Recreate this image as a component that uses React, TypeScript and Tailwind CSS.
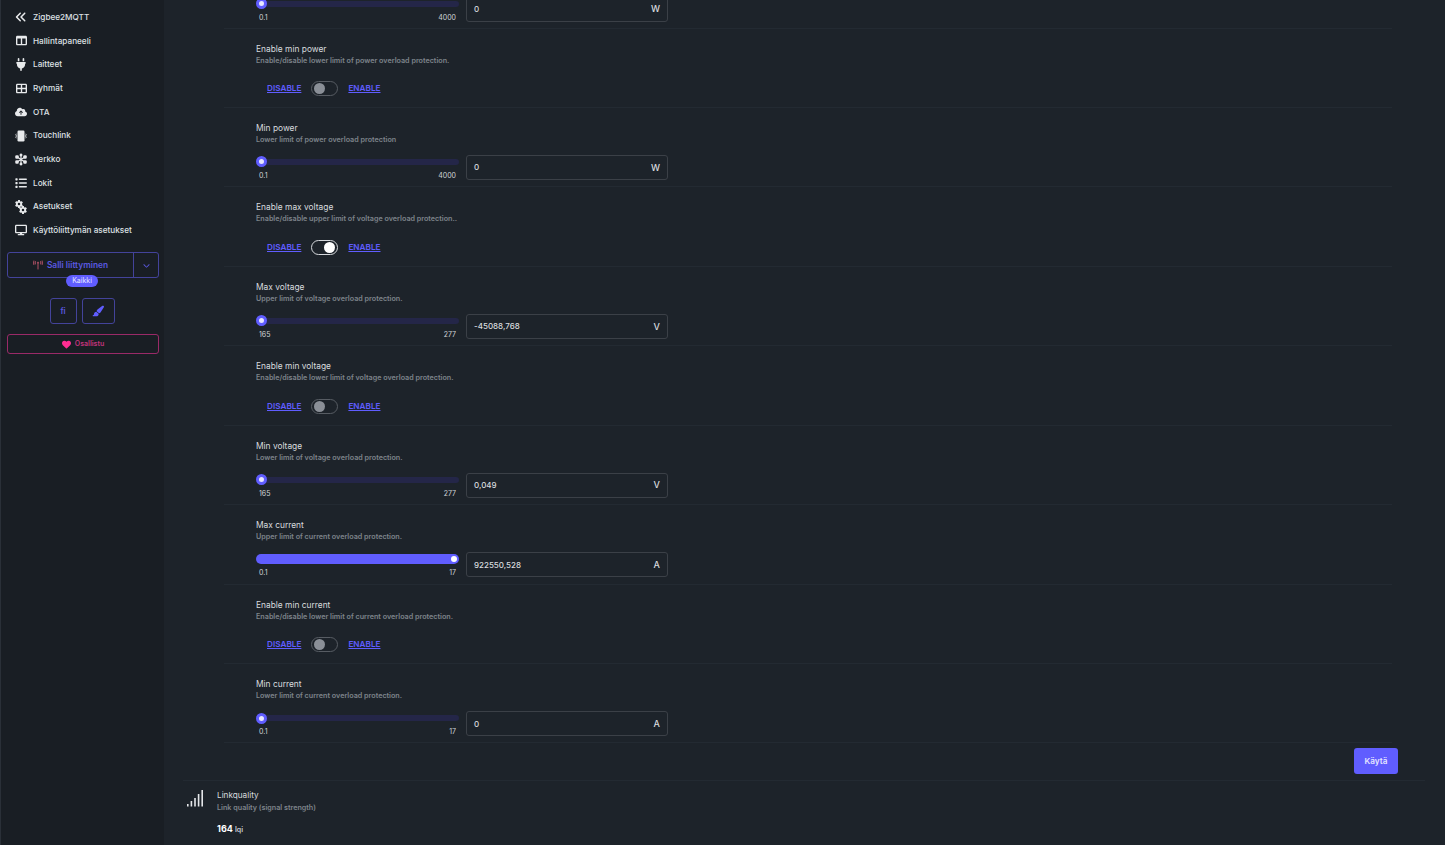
import React from "react";
import {
  FaAnglesLeft,
  FaTableColumns,
  FaPlug,
  FaTableCellsLarge,
  FaCloudArrowUp,
  FaList,
  FaGear,
  FaDisplay,
  FaTowerBroadcast,
  FaPaintbrush,
  FaHeart,
  FaChevronDown,
} from "react-icons/fa6";

function TouchlinkIcon() {
  return (
    <svg viewBox="0 0 24 24" className="h-[14px] w-[14px]" fill="currentColor">
      <rect x="5" y="1" width="14" height="22" rx="2.5" />
      <path d="M2.4 7 .6 9.5l1.6 2.5-1.6 2.5L2.4 17l.9-.8-1.1-1.7 1.6-2.5-1.6-2.5 1.1-1.7zM21.6 7l1.8 2.5-1.6 2.5 1.6 2.5-1.8 2.5-.9-.8 1.1-1.7-1.6-2.5 1.6-2.5-1.1-1.7z" />
    </svg>
  );
}

function NetworkIcon() {
  return (
    <svg viewBox="0 0 24 24" className="h-[13px] w-[13px]" fill="currentColor" stroke="currentColor">
      <path d="M12 2v20M4 7l16 10M20 7 4 17" strokeWidth="2.4" fill="none" />
      <circle cx="12" cy="3" r="2.4" />
      <circle cx="12" cy="21" r="2.4" />
      <rect x="1" y="4" width="6" height="6" rx="1.5" />
      <rect x="17" y="4" width="6" height="6" rx="1.5" />
      <rect x="1" y="14" width="6" height="6" rx="1.5" />
      <rect x="17" y="14" width="6" height="6" rx="1.5" />
    </svg>
  );
}

function GearsIcon() {
  return (
    <span className="flex h-[14px] w-[14px] flex-col">
      <FaGear className="h-[8px] w-[8px] self-start" />
      <FaGear className="-mt-[2px] h-[8px] w-[8px] self-end" />
    </span>
  );
}

const nav = [
  { label: "Zigbee2MQTT", icon: <FaAnglesLeft className="h-[12px] w-[12px]" /> },
  { label: "Hallintapaneeli", icon: <FaTableColumns className="h-[11px] w-[11px]" /> },
  { label: "Laitteet", icon: <FaPlug className="h-[13px] w-[13px]" /> },
  { label: "Ryhmät", icon: <FaTableCellsLarge className="h-[11px] w-[11px]" /> },
  { label: "OTA", icon: <FaCloudArrowUp className="h-[14px] w-[14px]" /> },
  { label: "Touchlink", icon: <TouchlinkIcon /> },
  { label: "Verkko", icon: <NetworkIcon /> },
  { label: "Lokit", icon: <FaList className="h-[12px] w-[12px]" /> },
  { label: "Asetukset", icon: <GearsIcon /> },
  { label: "Käyttöliittymän asetukset", icon: <FaDisplay className="h-[12px] w-[12px]" /> },
];

type Row =
  | { kind: "toggle"; title: string; desc: string; on?: boolean }
  | { kind: "range"; title: string; desc: string; min: string; max: string; value: string; unit: string; full?: boolean };

const rows: Row[] = [
  { kind: "toggle", title: "Enable min power", desc: "Enable/disable lower limit of power overload protection." },
  { kind: "range", title: "Min power", desc: "Lower limit of power overload protection", min: "0.1", max: "4000", value: "0", unit: "W" },
  { kind: "toggle", title: "Enable max voltage", desc: "Enable/disable upper limit of voltage overload protection..", on: true },
  { kind: "range", title: "Max voltage", desc: "Upper limit of voltage overload protection.", min: "165", max: "277", value: "-45088,768", unit: "V" },
  { kind: "toggle", title: "Enable min voltage", desc: "Enable/disable lower limit of voltage overload protection." },
  { kind: "range", title: "Min voltage", desc: "Lower limit of voltage overload protection.", min: "165", max: "277", value: "0,049", unit: "V" },
  { kind: "range", title: "Max current", desc: "Upper limit of current overload protection.", min: "0.1", max: "17", value: "922550,528", unit: "A", full: true },
  { kind: "toggle", title: "Enable min current", desc: "Enable/disable lower limit of current overload protection." },
  { kind: "range", title: "Min current", desc: "Lower limit of current overload protection.", min: "0.1", max: "17", value: "0", unit: "A" },
];

function Slider({ full }: { full?: boolean }) {
  if (full) {
    return (
      <div className="relative h-[10px] w-[203px] rounded-full bg-[#605dff]">
        <span className="absolute right-[2px] top-[2px] h-[6px] w-[6px] rounded-full bg-white" />
      </div>
    );
  }
  return (
    <div className="relative h-[6px] w-[203px] rounded-full bg-[#242648]">
      <span className="absolute -top-[2.5px] left-0 h-[11px] w-[11px] rounded-full border-[3px] border-[#605dff] bg-[#e8e8ff]" />
    </div>
  );
}

function RangeControl({ min, max, value, unit, full }: { min: string; max: string; value: string; unit: string; full?: boolean }) {
  return (
    <div className="flex items-start">
      <div className="w-[203px]">
        <div className="flex h-[14px] items-center">
          <Slider full={full} />
        </div>
        <div className="mt-[1px] flex justify-between px-[3px] text-[7px] leading-[11px] text-[#d0d3d7]">
          <span>{min}</span>
          <span>{max}</span>
        </div>
      </div>
      <div className="ml-[7px] flex h-[25px] w-[202px] items-center justify-between rounded-[3px] border border-[#3b4047] px-[7px] text-[8px] font-medium text-[#d8dbdf]">
        <span>{value}</span>
        <span className="text-[9px]">{unit}</span>
      </div>
    </div>
  );
}

function SettingRow({ row }: { row: Row }) {
  return (
    <div className="box-border h-[79.44px] border-b border-[#232a32] pl-8 pt-[14px]">
      <div className="text-[8.4px] leading-[13px] text-[#d8dbdf]">{row.title}</div>
      <div className="text-[7.2px] font-semibold leading-[10.5px] text-[#7d838b]">{row.desc}</div>
      {row.kind === "toggle" ? (
        <div className="mt-[14.5px] flex h-[16px] items-center pl-[11px] text-[8.2px] font-semibold text-[#605dff]">
          <span className="underline">DISABLE</span>
          <span
            className={`mx-[10px] flex h-[15px] w-[27px] items-center rounded-full border px-[2px] ${
              row.on ? "justify-end border-[#d5d8dc]" : "border-[#575c63]"
            }`}
          >
            <span className={`h-[11px] w-[11px] rounded-full ${row.on ? "bg-white" : "bg-[#8a8f97]"}`} />
          </span>
          <span className="underline">ENABLE</span>
        </div>
      ) : (
        <div className="mt-[9.5px]">
          <RangeControl min={row.min} max={row.max} value={row.value} unit={row.unit} full={row.full} />
        </div>
      )}
    </div>
  );
}

export default function App() {
  return (
    <div
      className="flex h-[845px] w-[1445px] overflow-hidden bg-[#1d232a] text-[#d8dbdf]"
      style={{ fontFamily: "Inter, sans-serif" }}
    >
      <aside className="flex w-[164px] shrink-0 flex-col border-l border-[#2a3038] bg-[#191e24] px-[6px] pt-[5.5px]">
        <nav className="flex flex-col">
          {nav.map((item) => (
            <div key={item.label} className="flex h-[23.67px] items-center gap-[6px] pl-[8px] text-[8.2px] font-medium text-[#dfe1e4]">
              <span className="flex w-[12px] justify-center text-[#e8eaec]">{item.icon}</span>
              {item.label}
            </div>
          ))}
        </nav>
        <div className="mt-[10px] flex h-[26px] w-[152px] rounded-[3px] border border-[#43439a] text-[8.4px] font-semibold text-[#5a58e0]">
          <div className="flex flex-1 items-center justify-center gap-[4px]">
            <FaTowerBroadcast className="h-[10px] w-[10px] text-[#a04c5e]" />
            Salli liittyminen
          </div>
          <div className="flex w-[25px] items-center justify-center border-l border-[#43439a]">
            <FaChevronDown className="h-[7px] w-[7px]" />
          </div>
        </div>
        <div className="relative z-10 -mt-[3px] flex justify-center pr-[1px]">
          <span className="flex h-[12px] w-[32px] items-center justify-center rounded-full bg-[#605dff] text-[7px] text-[#e6e6ff]">Kaikki</span>
        </div>
        <div className="mt-[11px] flex justify-center gap-[5px] pr-[1px]">
          <div className="flex h-[26px] w-[27px] items-center justify-center rounded-[3px] border border-[#43439a] text-[8px] font-semibold text-[#5a58e0]">fi</div>
          <div className="flex h-[26px] w-[33px] items-center justify-center rounded-[3px] border border-[#43439a] text-[#605dff]">
            <FaPaintbrush className="h-[12px] w-[12px]" />
          </div>
        </div>
        <div className="mt-[10px] flex h-[20px] w-[152px] items-center justify-center gap-[4px] rounded-[3px] border border-[#9a2a68] text-[7px] font-semibold text-[#c2347c]">
          <FaHeart className="h-[9px] w-[9px] text-[#ff2d92]" />
          Osallistu
        </div>
      </aside>
      <main className="min-w-0 flex-1 overflow-hidden">
        <div className="pl-[60px] pr-[53px]">
          {/* page is scrolled: only the bottom of this row is still visible */}
          <div className="box-border flow-root h-[28.54px] border-b border-[#232a32] pl-8">
            <div className="-mt-[3.4px]">
              <RangeControl min="0.1" max="4000" value="0" unit="W" />
            </div>
          </div>
          {rows.map((row) => (
            <SettingRow key={row.title} row={row} />
          ))}
        </div>
        <div className="flex justify-end pr-[47px] pt-[5px]">
          <button className="h-[26px] w-[44px] rounded-[3px] bg-[#605dff] text-[8.2px] font-semibold text-[#e6e6ff]">Käytä</button>
        </div>
        <div className="ml-[19px] mr-[20px] mt-[6px] flex border-t border-[#232a32] pl-[4px] pt-[8px]">
          <svg viewBox="0 0 17 17" className="mt-[1px] h-[17px] w-[17px]" fill="#e4e6e9">
            <rect x="0" y="14" width="1.6" height="2.5" />
            <rect x="3.6" y="11" width="1.6" height="5.5" />
            <rect x="7.2" y="8" width="1.6" height="8.5" />
            <rect x="10.8" y="4" width="1.6" height="12.5" />
            <rect x="14.4" y="0" width="1.6" height="16.5" />
          </svg>
          <div className="ml-[13px]">
            <div className="text-[8.2px] leading-[13px] text-[#d8dbdf]">Linkquality</div>
            <div className="text-[7.2px] font-semibold leading-[11px] text-[#7d838b]">Link quality (signal strength)</div>
            <div className="mt-[9px] text-[9px] font-bold text-white">
              164 <span className="text-[7px] font-semibold text-[#c9ccd1]">lqi</span>
            </div>
          </div>
        </div>
      </main>
    </div>
  );
}
